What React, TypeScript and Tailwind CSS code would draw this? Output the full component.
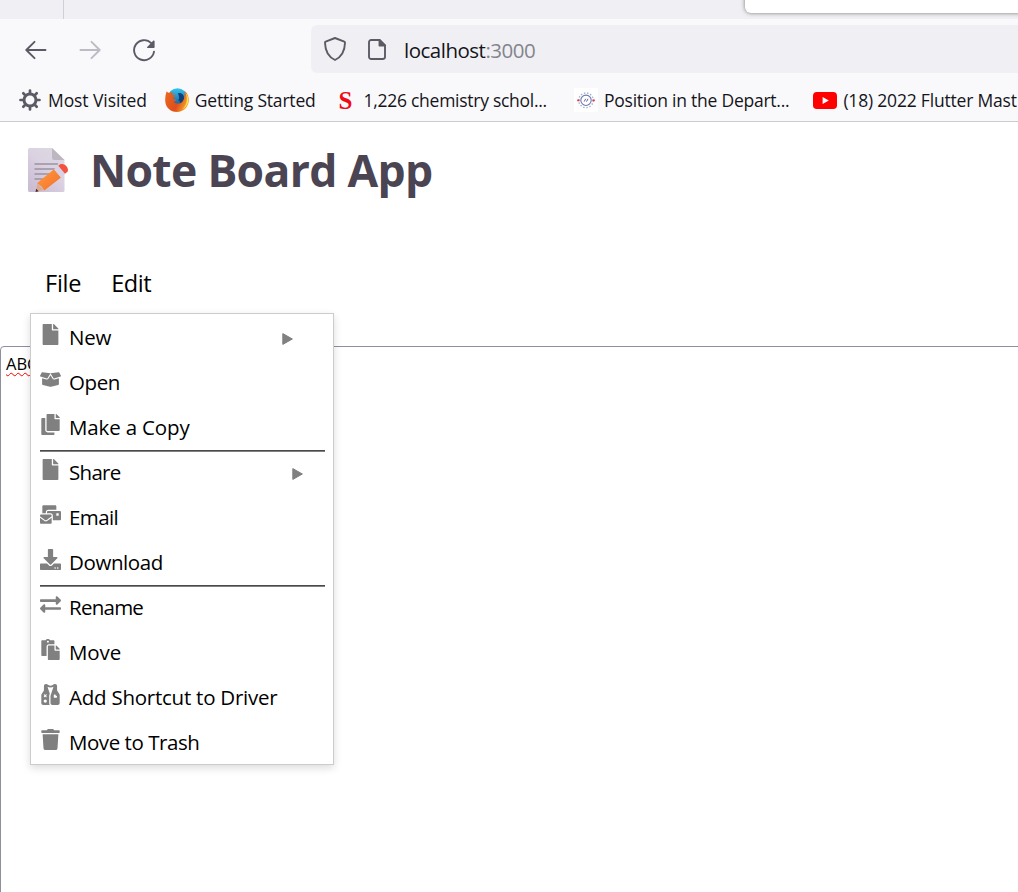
import type { ComponentType, ReactNode } from "react";
import {
  FaBoxOpen,
  FaCopy,
  FaDownload,
  FaExchangeAlt,
  FaFile,
  FaMailBulk,
  FaPaste,
  FaTrash,
} from "react-icons/fa";
import { FaVestPatches } from "react-icons/fa6";

function BackIcon({ className }: { className: string }) {
  return (
    <svg viewBox="0 0 22 20" className={className} fill="none" stroke="currentColor" strokeWidth="1.9" strokeLinecap="round" strokeLinejoin="round">
      <path d="M20.5 10H1.5M9.5 1.8L1.3 10l8.2 8.2" />
    </svg>
  );
}

function ReloadIcon() {
  return (
    <svg viewBox="0 0 24 24" className="h-6 w-6 text-[#5b5b66]" fill="none">
      <path d="M19.3 5.2A10 10 0 1 0 22 13.600" stroke="currentColor" strokeWidth="1.9" strokeLinecap="round" />
      <path d="M22.6 3.100v6.2a.7.7 0 0 1-.7.7h-6.2c-.6 0-.9-.7-.5-1.1L21.400 2.600c.4-.4 1.200-.1 1.200.5z" fill="currentColor" />
    </svg>
  );
}

function ShieldIcon() {
  return (
    <svg viewBox="0 0 24 26" className="h-[26px] w-6" fill="none" stroke="#5b5b66" strokeWidth="1.9" strokeLinejoin="round">
      <path d="M12 2L2.700 5.600c-.5.2-.8.600-.7 1.100C2.200 14.500 5 20.600 12 24c7-3.400 9.800-9.500 10-17.300 0-.5-.2-.9-.7-1.100z" />
    </svg>
  );
}

function PageIcon() {
  return (
    <svg viewBox="0 0 18 21" className="h-[21px] w-[18px]" fill="none" stroke="#5b5b66" strokeWidth="1.9" strokeLinejoin="round">
      <path d="M3.200 1h8.300L17 6.500v11.300a2.200 2.200 0 0 1-2.200 2.200H3.200A2.200 2.200 0 0 1 1 17.800V3.200A2.200 2.200 0 0 1 3.200 1z" />
      <path d="M11.500 1v5.500H17z" fill="#5b5b66" />
    </svg>
  );
}

function GearIcon() {
  return (
    <svg viewBox="0 0 22 22" className="h-[22px] w-[22px]" fill="none" stroke="#5b5b66">
      <circle cx="11" cy="11" r="6" strokeWidth="3" />
      <path
        d="M11 1.500V4M11 18v2.500M1.500 11H4M18 11h2.500M4.300 4.300L6 6M16 16l1.700 1.700M4.300 17.700L6 16M16 6l1.700-1.700"
        strokeWidth="2.700"
        strokeLinecap="round"
      />
    </svg>
  );
}

function FirefoxIcon() {
  return (
    <svg viewBox="0 0 24 24" className="h-6 w-6">
      <defs>
        <linearGradient id="globe" x1="0" y1="0" x2="0" y2="1">
          <stop offset="0" stopColor="#35c4f0" />
          <stop offset="1" stopColor="#12528f" />
        </linearGradient>
        <linearGradient id="fox" x1="0" y1="0.300" x2="1" y2="0.700">
          <stop offset="0" stopColor="#e9661f" />
          <stop offset="0.550" stopColor="#df4d1c" />
          <stop offset="1" stopColor="#fbb62a" />
        </linearGradient>
      </defs>
      <circle cx="12.500" cy="10" r="9.800" fill="url(#globe)" />
      <path d="M13 5c3-.5 6 1 6 5s-2 6-5 6c2-2 1-3-1-4 2-1 1-3 0-7z" fill="#123f78" />
      <path
        d="M1.800 3.200C2.600 4.300 3.500 4.800 5 4.700c1-.6 2.200-.7 3.200-.4C7.200 5 7 5.900 7.500 6.800c1 .3 2.500.2 3 .8-.2 1.200-1.500 1.500-2.300 2.300.2.800.2 1.400.1 1.700 1.200-.6 2.300-.3 3.200.5-.7 1.400-2 1.500-3 1.500 1.500 2.600 6.300 2.500 8.600.4 2.500-2.300 2.800-6 1.800-9 1 .6 1.500 1.700 1.700 2.700.2-2.200-.4-4-1.500-5.300C22 4.500 24 8 23.900 12.500 23.500 19 18.500 24 12 24S.3 19.200.2 12.700C.2 9 .6 5.800 1.800 3.200z"
        fill="url(#fox)"
      />
      <path d="M20.500 4.800c2.200 2.500 3.300 5.500 2.500 9.500-.8 3.300-3 5.700-5.500 7 3-3.500 4.300-6 4.300-10 0-2.500-.4-4.500-1.300-6.500z" fill="#ffe14d" />
    </svg>
  );
}

function DepartmentIcon() {
  return (
    <svg viewBox="0 0 24 24" className="h-6 w-6" fill="none">
      <rect width="24" height="24" fill="#fff" />
      <circle cx="12" cy="12.300" r="7.300" stroke="#a9b3cd" strokeWidth="1.400" strokeDasharray="1.500 1.700" />
      <circle cx="12" cy="12.300" r="5.200" stroke="#6f78b2" strokeWidth="1.100" />
      <path d="M10.200 13.600l1.500-2.800M12.500 13.600l1.500-2.800" stroke="#5c66a8" strokeWidth="1" />
      <path d="M3.200 12.300h2.300M18.500 12.300h2.300" stroke="#dc3545" strokeWidth="1.800" />
    </svg>
  );
}

function YoutubeIcon() {
  return (
    <svg viewBox="0 0 24 17" className="h-[17px] w-6">
      <rect width="24" height="17" rx="3.800" fill="#f00" />
      <path d="M9.600 5v7l6.200-3.500z" fill="#fff" />
    </svg>
  );
}

function MemoIcon() {
  return (
    <svg viewBox="0 0 42 46" className="-mt-[2px] h-[46px] w-[42px]">
      <defs>
        <linearGradient id="paper" x1="1" y1="0" x2="0.200" y2="1">
          <stop offset="0" stopColor="#dcdbe2" />
          <stop offset="0.500" stopColor="#dbd2e2" />
          <stop offset="1" stopColor="#cbbdd4" />
        </linearGradient>
        <linearGradient id="pencil" x1="0" y1="0" x2="1" y2="1">
          <stop offset="0" stopColor="#ff9a3d" />
          <stop offset="1" stopColor="#f4702c" />
        </linearGradient>
      </defs>
      <path d="M2.500 1H25l12.500 12v30.500a1.500 1.500 0 0 1-1.500 1.500H2.500A1.500 1.500 0 0 1 1 43.500v-41A1.500 1.500 0 0 1 2.500 1z" fill="url(#paper)" />
      <path d="M25 1l12.500 12H27a2 2 0 0 1-2-2z" fill="#bdb7c2" />
      <path d="M8 17h22.500M8 22h20M8 27h14M8 32h9" stroke="#9a93a1" strokeWidth="1.400" strokeLinecap="round" />
      <path d="M10.500 36.300L8.500 44.800l8.300-1.900z" fill="#d9ad94" />
      <path d="M9.200 41.800l-.7 3.100 3.200-.7z" fill="#4b2534" />
      <path d="M10 36.300L27 22.200l7 8.200-16.700 13.200c-1.700-3.300-3.900-5.500-7.300-7.300z" fill="url(#pencil)" />
      <path d="M27 22.200l4.300-3.400 6.700 8-4 3.600z" fill="#d7d3e6" />
      <path d="M31.300 18.800l2-1.500c3.900-2 9.300 3.600 7.200 7.400L38 26.800z" fill="#f4513f" />
    </svg>
  );
}

function Bookmark({ className, icon, children }: { className: string; icon: ReactNode; children: ReactNode }) {
  return (
    <div className={`flex h-full shrink-0 items-center ${className}`}>
      {icon}
      <span className="whitespace-nowrap">{children}</span>
    </div>
  );
}

type Item = {
  label: string;
  icon: ComponentType<{ className?: string }>;
  tracking: string;
  arrow?: string;
};

const groups: Item[][] = [
  [
    { label: "New", icon: FaFile, tracking: "tracking-[-0.2px]", arrow: "mr-[40px]" },
    { label: "Open", icon: FaBoxOpen, tracking: "tracking-[-0.4px]" },
    { label: "Make a Copy", icon: FaCopy, tracking: "tracking-[-0.15px]" },
  ],
  [
    { label: "Share", icon: FaFile, tracking: "tracking-[-0.7px]", arrow: "mr-[30px]" },
    { label: "Email", icon: FaMailBulk, tracking: "tracking-[-0.6px]" },
    { label: "Download", icon: FaDownload, tracking: "tracking-[-0.4px]" },
  ],
  [
    { label: "Rename", icon: FaExchangeAlt, tracking: "tracking-[-0.75px]" },
    { label: "Move", icon: FaPaste, tracking: "tracking-[-0.1px]" },
    { label: "Add Shortcut to Driver", icon: FaVestPatches, tracking: "tracking-[-0.24px]" },
    { label: "Move to Trash", icon: FaTrash, tracking: "tracking-[-0.45px]" },
  ],
];

function MenuRow({ label, icon: Icon, tracking, arrow }: Item) {
  return (
    <div className="flex h-[45px] items-center pl-[9px]">
      <Icon className="-mt-[5px] h-[21px] w-[21px] shrink-0 text-[#808080]" />
      <span className={`ml-[8px] whitespace-nowrap pt-[1px] text-[20.5px] leading-7 text-black ${tracking}`}>{label}</span>
      {arrow && (
        <svg viewBox="0 0 11 12" className={`ml-auto mt-[5px] h-3 w-[11px] ${arrow}`}>
          <path d="M.8.600v10.800L10.400 6z" fill="#808080" stroke="#808080" strokeWidth="1" strokeLinejoin="round" />
        </svg>
      )}
    </div>
  );
}

function FileMenu() {
  return (
    <div className="absolute left-[30px] top-[-33px] w-[304px] border border-[#ccc] bg-white shadow-[0_3px_8px_rgba(0,0,0,0.14)]">
      {groups.map((group, i) => (
        <div key={group[0].label}>
          {i > 0 && <div className="-mb-[3px] ml-[9px] mr-2 mt-px h-[2px] border-t border-[#4a4a4a] bg-[#808080]" />}
          {group.map((item) => (
            <MenuRow key={item.label} {...item} />
          ))}
        </div>
      ))}
    </div>
  );
}

export default function App() {
  return (
    <div className="flex h-[892px] w-full flex-col overflow-hidden bg-white font-['Open_Sans','Noto_Sans',sans-serif] text-[#15141a]">
      <header className="relative shrink-0">
        <div className="h-[19px] bg-[#f0f0f4]">
          <div className="h-full w-16 border-r border-[#cfcfd8]" />
        </div>
        <div className="absolute -right-2 top-[-10px] h-[23px] w-[281px] rounded-md bg-white shadow-[0_0_4px_rgba(0,0,0,0.5)]" />
        <div className="flex h-[62px] items-center bg-[#f9f9fb]">
          <BackIcon className="ml-[25px] h-5 w-[22px] text-[#5b5b66]" />
          <BackIcon className="ml-8 h-5 w-[22px] rotate-180 text-[#bcbcc4]" />
          <div className="ml-[31px]">
            <ReloadIcon />
          </div>
          <div className="-mt-[2px] ml-[155px] flex h-12 flex-1 items-center rounded-l-md bg-[#f0f0f4] pl-3">
            <ShieldIcon />
            <div className="ml-[21px]">
              <PageIcon />
            </div>
            <div className="ml-[18px] mt-px text-[20.5px] leading-7 tracking-[-0.5px]">
              localhost<span className="text-[#84848c]">:3000</span>
            </div>
          </div>
        </div>
        <nav className="flex h-[41px] items-center overflow-hidden border-b border-[#cccccf] bg-[#f9f9fb] pb-[2px] text-[17.5px] leading-6">
          <Bookmark className="ml-[19px] gap-[7px] tracking-[-0.08px]" icon={<GearIcon />}>Most Visited</Bookmark>
          <Bookmark className="ml-[18px] gap-[6px] tracking-[-0.2px]" icon={<FirefoxIcon />}>Getting Started</Bookmark>
          <Bookmark
            className="ml-[23px] gap-[10px] tracking-[-0.27px]"
            icon={<span className="w-[15px] text-[25px] font-bold leading-none text-[#f00a16] font-['Liberation_Serif',serif]">S</span>}
          >
            1,226 chemistry schol...
          </Bookmark>
          <Bookmark className="ml-[27px] gap-[6px] tracking-[-0.24px]" icon={<DepartmentIcon />}>Position in the Depart...</Bookmark>
          <Bookmark className="ml-6 gap-[6px] tracking-[-0.2px]" icon={<YoutubeIcon />}>(18) 2022 Flutter Mast</Bookmark>
        </nav>
      </header>

      <div className="flex h-[98px] shrink-0 items-center pl-[27px]">
        <MemoIcon />
        <h1 className="-mt-[2px] ml-[21px] text-[44.5px] font-bold leading-[60px] tracking-[-0.7px] text-[#4a4453]">Note Board App</h1>
      </div>

      <div className="mt-[42px] flex h-[84px] shrink-0 gap-[30px] pl-[45px] pt-[5px] text-[23.5px] leading-8 text-black">
        <span className="tracking-[-0.25px]">File</span>
        <span className="tracking-[-0.4px]">Edit</span>
      </div>

      <main className="relative mr-[-8px] flex-1">
        <div className="h-[600px] rounded-tl-[4px] border border-[#8f8f9d] pl-[5px] pt-[5px]">
          <span className="text-[16.5px] font-medium leading-6 text-black underline decoration-[#f00] decoration-wavy decoration-1 underline-offset-[2px]">ABC</span>
        </div>
        <FileMenu />
      </main>
    </div>
  );
}
